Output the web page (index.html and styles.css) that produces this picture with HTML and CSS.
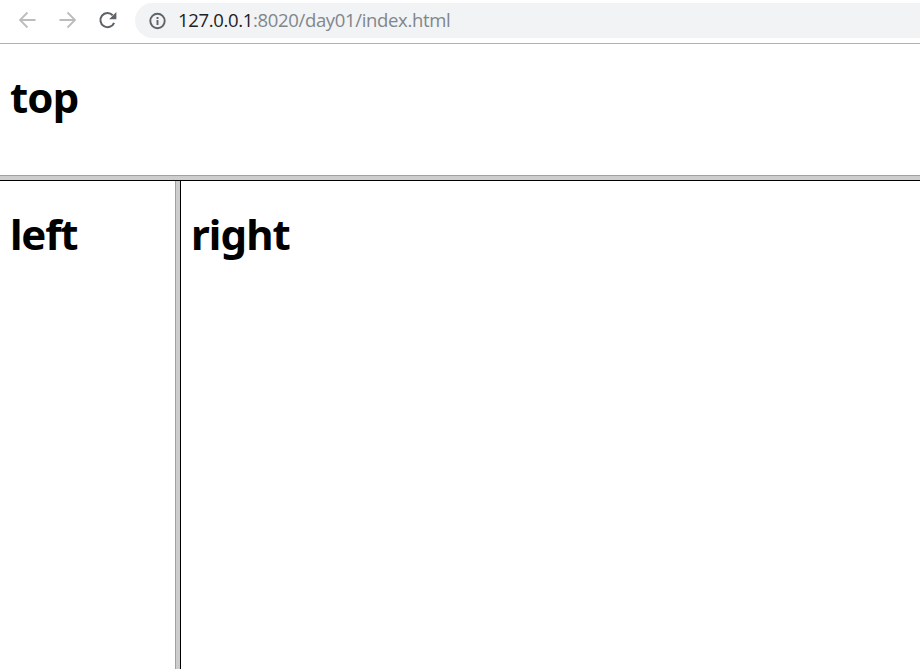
FILE: index.html
```html
<!DOCTYPE html>
<html lang="en">
<head>
<meta charset="utf-8">
<title>index</title>
<link rel="stylesheet" href="styles.css">
</head>
<body>
<header class="toolbar">
  <svg class="icon back" viewBox="0 0 20 20"><path d="M18.5 10H3.5M10.5 2.5L3 10L10.5 17.5"/></svg>
  <svg class="icon forward" viewBox="0 0 20 20"><path d="M2.5 10H17.5M10.5 2.5L18 10L10.5 17.5"/></svg>
  <svg class="icon reload" viewBox="0 0 20 20"><path d="M17.1 12.8A7.1 7.1 0 1 1 15.7 5.2"/><path class="solid" d="M19.4 2V9.3H12.1Z"/></svg>
  <div class="address">
    <svg class="info" viewBox="0 0 18 18"><circle cx="9.5" cy="9" r="7.2"/><path d="M9.5 8V13M9.5 5V7"/></svg>
    <span class="url"><span class="host">127.0.0.1</span><span class="path">:8020/day01/index.html</span></span>
  </div>
</header>
<section class="frame top"><h1>top</h1></section>
<div class="divider horizontal"></div>
<main class="columns">
  <section class="frame left"><h1>left</h1></section>
  <div class="divider vertical"></div>
  <section class="frame right"><h1>right</h1></section>
</main>
</body>
</html>
```
FILE: styles.css
```css
* { box-sizing: border-box; }
body {
  margin: 0;
  height: 669px;
  overflow: hidden;
  display: flex;
  flex-direction: column;
  background: #fff;
  color: #000;
  font-family: "Noto Sans", "Open Sans", sans-serif;
}
.toolbar {
  flex: none;
  height: 44px;
  display: flex;
  align-items: flex-start;
  padding: 3px 0 0 17px;
  border-bottom: 1px solid #b0b1b2;
}
.icon {
  flex: none;
  width: 20px;
  height: 20px;
  margin: 7px 20px 0 0;
  fill: none;
  stroke: #babcbe;
  stroke-width: 1.8;
}
.reload { stroke: #5f6368; stroke-width: 2.1; margin-right: 18px; }
.reload .solid { fill: #5f6368; stroke: none; }
.address {
  flex: 1;
  height: 35px;
  display: flex;
  align-items: center;
  padding-left: 13px;
  background: #f1f3f4;
  border-radius: 18px 0 0 18px;
}
.info {
  width: 18px;
  height: 18px;
  margin-right: 12px;
  fill: none;
  stroke: #5f6368;
  stroke-width: 1.9;
}
.url {
  font-family: "Open Sans", "Noto Sans", sans-serif;
  font-size: 18.5px;
  line-height: 33px;
  margin-bottom: 2px;
  white-space: nowrap;
  letter-spacing: -0.34px;
}
.host { color: #202124; }
.path { color: #80868b; }
.frame { padding-left: 10px; }
.frame h1 {
  margin: 0;
  padding-top: 23px;
  font-size: 42px;
  line-height: 60px;
  font-weight: 700;
  letter-spacing: -0.9px;
}
.top { flex: none; height: 131px; }
.divider { flex: none; background: #cdcdcd; }
.horizontal { height: 6px; border-top: 1px solid #a0a0a0; border-bottom: 1px solid #000; }
.vertical { width: 6px; border-left: 1px solid #a0a0a0; border-right: 1px solid #000; }
.columns { flex: 1; display: flex; }
.left { width: 175px; }
.left h1 { letter-spacing: -1.2px; }
.right { flex: 1; }
```
